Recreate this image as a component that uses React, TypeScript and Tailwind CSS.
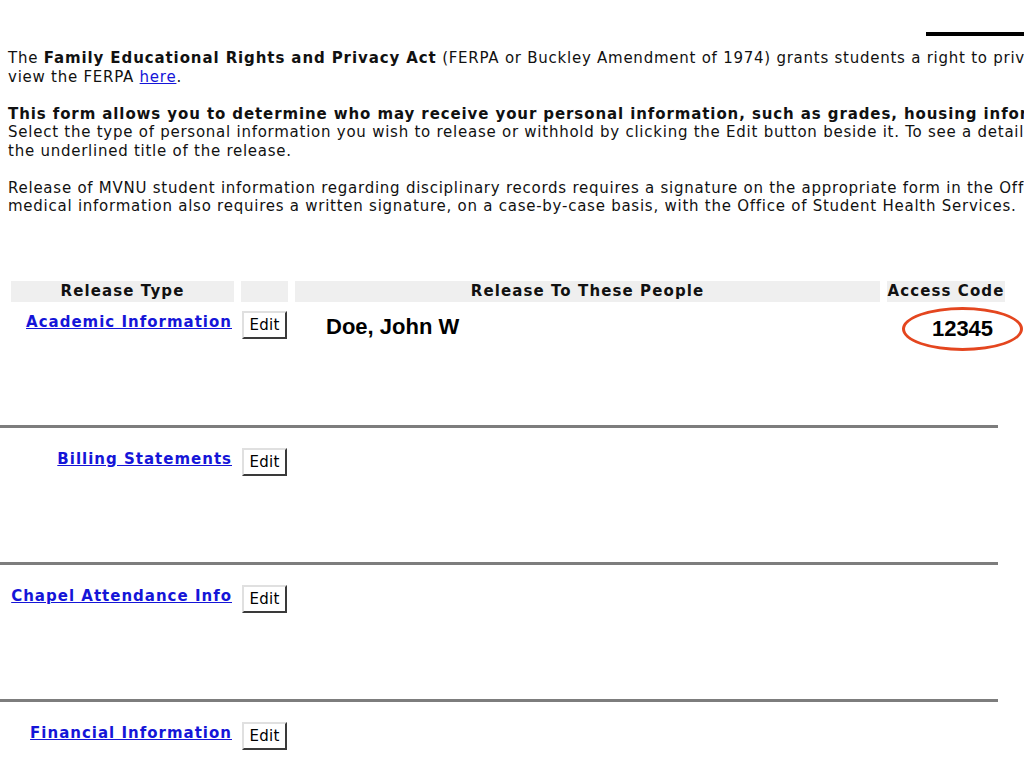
import React from "react";

type Release = {
  title: string;
  person?: string;
  code?: string;
};

const releases: Release[] = [
  { title: "Academic Information", person: "Doe, John W", code: "12345" },
  { title: "Billing Statements" },
  { title: "Chapel Attendance Info" },
  { title: "Financial Information" },
];

const cols = "grid grid-cols-[223px_47px_585px_118px] gap-x-[7px] ml-[11px]";

function EditButton() {
  return (
    <button className="w-[45px] h-[28px] pt-[2px] bg-white border-2 border-t-[#e0e0e0] border-l-[#e0e0e0] border-r-[#3a3a3a] border-b-[#3a3a3a] text-[15px] leading-none text-black tracking-[0.3px] font-['DejaVu_Sans',sans-serif]">
      Edit
    </button>
  );
}

function ReleaseRow({ item, first }: { item: Release; first: boolean }) {
  return (
    <div className={`${cols} ${first ? "h-[123px]" : "h-[134px] pt-[11px]"}`}>
      <div className="pt-[8px] pr-[2px] text-right whitespace-nowrap">
        <a
          href="#"
          className="text-[15px] leading-[18px] font-bold tracking-[1px] text-[#1515d8] underline"
        >
          {item.title}
        </a>
      </div>
      <div className="pt-[9px] pl-[1px]">
        <EditButton />
      </div>
      <div className="pt-[12px] pl-[31px]">
        {item.person && (
          <span className="text-[22px] leading-[26px] font-bold text-black font-['Liberation_Sans',Arial,sans-serif]">
            {item.person}
          </span>
        )}
      </div>
      <div className="pt-[5px]">
        {item.code && (
          <div className="ml-[15px] w-[121px] h-[44px] rounded-[50%] border-[3px] border-[#e4461f] flex items-center justify-center">
            <span className="text-[22px] leading-none font-bold text-black font-['Liberation_Sans',Arial,sans-serif]">
              {item.code}
            </span>
          </div>
        )}
      </div>
    </div>
  );
}

export default function App() {
  return (
    <div className="w-[1024px] h-[768px] overflow-hidden bg-white text-[#111] font-['DejaVu_Sans',Verdana,sans-serif]">
      <div className="pt-[32px] flex justify-end">
        <div className="w-[98px] h-[4px] bg-black" />
      </div>

      <div className="mt-[13px] px-[8px] text-[15px] leading-[18.5px] tracking-[0.75px] whitespace-nowrap">
        <p>
          The <b className="tracking-[0.9px]">Family Educational Rights and Privacy Act</b> (FERPA
          or Buckley Amendment of 1974) grants students a right to privacy
          <br />
          view the FERPA{" "}
          <a href="#" className="text-[#1515d8] underline">
            here
          </a>
          .
        </p>
        <p className="mt-[18.5px]">
          <b className="tracking-[0.9px]">
            This form allows you to determine who may receive your personal information, such as
            grades, housing information
          </b>
          <br />
          Select the type of personal information you wish to release or withhold by clicking the
          Edit button beside it. To see a detailed
          <br />
          the underlined title of the release.
        </p>
        <p className="mt-[18.5px]">
          Release of MVNU student information regarding disciplinary records requires a signature
          on the appropriate form in the Office
          <br />
          medical information also requires a written signature, on a case-by-case basis, with the
          Office of Student Health Services.
        </p>
      </div>

      <div
        className={`${cols} mt-[65px] text-[15px] font-bold tracking-[1.1px] text-[#111]`}
      >
        <div className="h-[21px] bg-[#efefef] flex items-center justify-center">Release Type</div>
        <div className="h-[21px] bg-[#efefef]" />
        <div className="h-[21px] bg-[#efefef] flex items-center justify-center">
          Release To These People
        </div>
        <div className="h-[21px] bg-[#efefef] flex items-center justify-center">Access Code</div>
      </div>

      {releases.map((item, i) => (
        <div key={item.title}>
          {i > 0 && <div className="w-[998px] h-[3px] bg-[#7d7d7d]" />}
          <ReleaseRow item={item} first={i === 0} />
        </div>
      ))}
    </div>
  );
}
